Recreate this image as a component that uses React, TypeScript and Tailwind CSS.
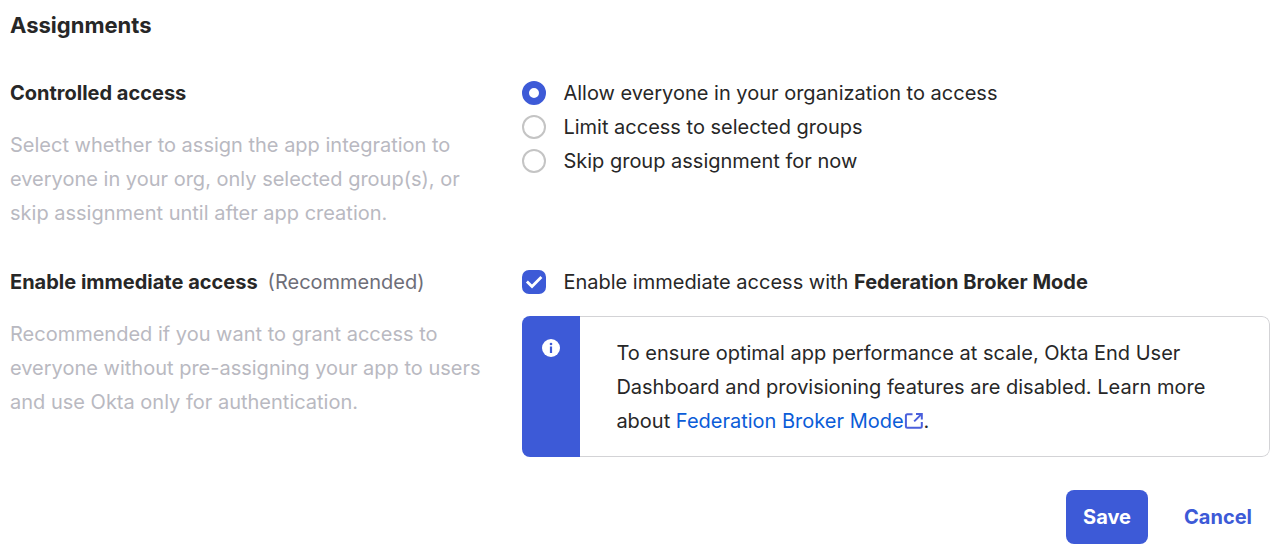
import { useState } from "react";

const ACCESS_OPTIONS = [
  { value: "everyone", label: "Allow everyone in your organization to access" },
  { value: "limited", label: "Limit access to selected groups" },
  { value: "skip", label: "Skip group assignment for now" },
];

function ExternalLinkIcon() {
  return (
    <svg
      aria-hidden="true"
      viewBox="0 0 20 18"
      className="inline-block h-[18px] w-5 align-[-2px]"
      fill="none"
      stroke="#4a5fdc"
      strokeWidth="2"
    >
      <path d="M8.5 2.2H3.4Q1.9 2.2 1.9 3.7V14.3Q1.9 15.8 3.4 15.8H16.3Q17.8 15.8 17.8 14.3V10" />
      <path d="M10.2 9.4L17 2.6" />
      <path d="M12 1.9H17.8V7.4" />
    </svg>
  );
}

function InfoIcon() {
  return (
    <svg aria-hidden="true" viewBox="0 0 18 18" className="size-[18px]">
      <circle cx="9" cy="9" r="9" fill="#fff" />
      <circle cx="9" cy="5" r="1.3" fill="#3d5ad7" />
      <path d="M7.9 7.5H10.1V14H7.9Z" fill="#3d5ad7" />
    </svg>
  );
}

function AccessRadios() {
  const [access, setAccess] = useState("everyone");
  return (
    <div role="radiogroup" aria-labelledby="controlled-access">
      {ACCESS_OPTIONS.map((option) => (
        <label key={option.value} className="flex items-center gap-[17px]">
          <input
            type="radio"
            name="access"
            value={option.value}
            checked={access === option.value}
            onChange={() => setAccess(option.value)}
            className="size-6 shrink-0 appearance-none rounded-full border-[2px] border-[#c4c4c4] bg-white checked:border-[7px] checked:border-[#3d5ad7]"
          />
          {option.label}
        </label>
      ))}
    </div>
  );
}

function BrokerModeCheckbox() {
  const [enabled, setEnabled] = useState(true);
  return (
    <label className="flex items-center gap-[17px]">
      <span className="grid size-6 shrink-0 place-items-center">
        <input
          type="checkbox"
          checked={enabled}
          onChange={(event) => setEnabled(event.target.checked)}
          className="peer col-start-1 row-start-1 size-6 appearance-none rounded-[7px] border-2 border-[#c4c4c4] bg-white checked:border-[#3d5ad7] checked:bg-[#3d5ad7]"
        />
        <svg
          aria-hidden="true"
          viewBox="0 0 24 24"
          className="pointer-events-none invisible col-start-1 row-start-1 size-6 peer-checked:visible"
          fill="none"
          stroke="#fff"
          strokeWidth="2.8"
        >
          <path d="M4.9 11.6L10 16.5L19.4 7.1" />
        </svg>
      </span>
      <span>
        Enable immediate access with <strong className="font-bold">Federation Broker Mode</strong>
      </span>
    </label>
  );
}

export default function App() {
  return (
    <form
      onSubmit={(event) => event.preventDefault()}
      className="bg-white pt-2 pr-2 pb-2.5 pl-2.5 font-[Inter,sans-serif] text-[20px] leading-[34px] text-[#272727]"
    >
      <h2 className="text-[22px] font-bold">Assignments</h2>

      <section className="mt-[34px] grid grid-cols-[2fr_3fr] gap-3.5">
        <div className="pr-4">
          <h3 id="controlled-access" className="font-bold">
            Controlled access
          </h3>
          <p className="mt-[18px] text-[#b9b9c1]">
            Select whether to assign the app integration to everyone in your org, only selected
            group(s), or skip assignment until after app creation.
          </p>
        </div>
        <AccessRadios />
      </section>

      <section className="mt-[35px] grid grid-cols-[2fr_3fr] gap-3.5">
        <div className="pr-4">
          <h3 className="flex flex-wrap gap-x-2.5 font-bold">
            Enable immediate access
            <span className="font-normal text-[#6e6e78]">(Recommended)</span>
          </h3>
          <p className="mt-[18px] text-[#b9b9c1]">
            Recommended if you want to grant access to everyone without pre-assigning your app to
            users and use Okta only for authentication.
          </p>
        </div>
        <div>
          <BrokerModeCheckbox />
          <div className="mt-[17px] flex overflow-hidden rounded-lg">
            <div className="flex w-[58px] shrink-0 justify-center bg-[#3d5ad7] pt-[23px]">
              <InfoIcon />
            </div>
            <div className="grow rounded-r-lg border border-l-0 border-[#d3d3d6] pt-[19px] pb-[18px] pr-12 pl-9">
              <p>
                To ensure optimal app performance at scale, Okta End User Dashboard and
                provisioning features are disabled. Learn more about{" "}
                <a href="#federation-broker-mode" className="whitespace-nowrap text-[#0b5cd8]">
                  Federation Broker Mode
                  <ExternalLinkIcon />
                </a>
                .
              </p>
            </div>
          </div>
        </div>
      </section>

      <div className="mt-[33px] flex justify-end gap-[18px] font-bold">
        <button type="submit" className="rounded-lg bg-[#3d5ad7] px-[17px] py-2.5 text-white">
          Save
        </button>
        <button type="button" className="rounded-lg px-[18px] py-2.5 text-[#3d5ad7]">
          Cancel
        </button>
      </div>
    </form>
  );
}
